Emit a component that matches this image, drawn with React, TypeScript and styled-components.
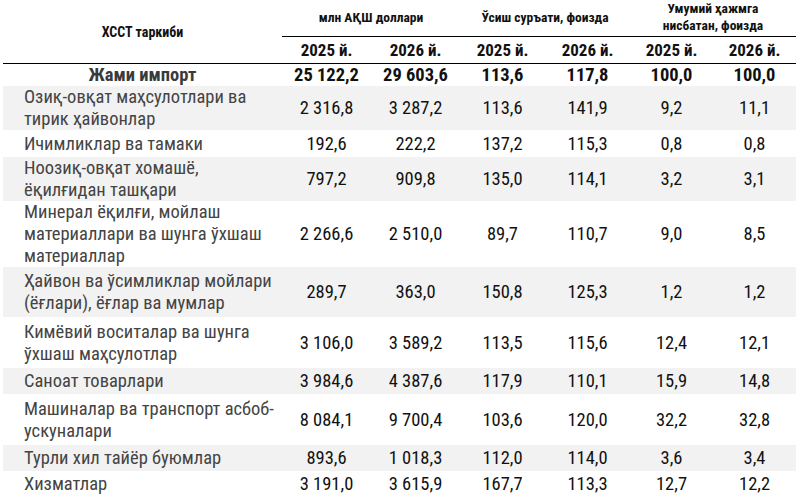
import React from 'react';
import styled, { createGlobalStyle } from 'styled-components';

const GlobalStyle = createGlobalStyle`
  html, body {
    margin: 0;
    padding: 0;
    background: #fff;
  }
  body {
    font-family: "Roboto Condensed", "Liberation Sans Narrow", Roboto, "Liberation Sans", sans-serif;
    font-stretch: condensed;
  }
`;

const Sheet = styled.table`
  margin-left: 3px;
  width: 793px;
  border-collapse: collapse;
  table-layout: fixed;
`;

const GroupHead = styled.th<{ $rule?: boolean }>`
  height: 33px;
  padding: 0 4px 2px;
  font-size: 13.5px;
  font-weight: 700;
  line-height: 17px;
  color: #111;
  text-align: center;
  vertical-align: middle;
  border-bottom: ${(p) => (p.$rule ? '1px solid #000' : 'none')};
`;

const NameHead = styled.th`
  font-size: 14px;
  font-weight: 700;
  color: #111;
  text-align: center;
  vertical-align: middle;
  padding: 0;
  border-bottom: 1px solid #000;
`;

const YearHead = styled.th`
  height: 26px;
  padding: 0;
  font-size: 17px;
  font-weight: 700;
  color: #111;
  text-align: center;
  vertical-align: middle;
  border-bottom: 1px solid #000;
`;

const Row = styled.tr<{ $shade: boolean; $h: number }>`
  height: ${(p) => p.$h}px;
  background: ${(p) => (p.$shade ? '#f2f2f2' : '#fff')};
`;

const Label = styled.td<{ $total?: boolean }>`
  padding: 0 0 0 ${(p) => (p.$total ? 0 : 21)}px;
  font-size: 18.5px;
  line-height: 22px;
  font-weight: ${(p) => (p.$total ? 700 : 400)};
  color: ${(p) => (p.$total ? '#3a3a3a' : '#444')};
  text-align: ${(p) => (p.$total ? 'center' : 'left')};
  vertical-align: middle;
  white-space: pre-line;
`;

const Num = styled.td<{ $total?: boolean }>`
  padding: 0;
  font-size: 18.5px;
  line-height: 22px;
  font-weight: ${(p) => (p.$total ? 700 : 400)};
  color: #111;
  text-align: center;
  vertical-align: middle;
  white-space: nowrap;
`;

type Line = { name: string; h: number; values: string[]; total?: boolean };

const lines: Line[] = [
  { name: 'Жами импорт', h: 22, total: true, values: ['25 122,2', '29 603,6', '113,6', '117,8', '100,0', '100,0'] },
  { name: 'Озиқ-овқат маҳсулотлари ва\nтирик ҳайвонлар', h: 44, values: ['2 316,8', '3 287,2', '113,6', '141,9', '9,2', '11,1'] },
  { name: 'Ичимликлар ва тамаки', h: 27, values: ['192,6', '222,2', '137,2', '115,3', '0,8', '0,8'] },
  { name: 'Ноозиқ-овқат хомашё,\nёқилғидан ташқари', h: 44, values: ['797,2', '909,8', '135,0', '114,1', '3,2', '3,1'] },
  { name: 'Минерал ёқилғи, мойлаш\nматериаллари ва шунга ўхшаш\nматериаллар', h: 66, values: ['2 266,6', '2 510,0', '89,7', '110,7', '9,0', '8,5'] },
  { name: 'Ҳайвон ва ўсимликлар мойлари\n(ёғлари), ёғлар ва мумлар', h: 50, values: ['289,7', '363,0', '150,8', '125,3', '1,2', '1,2'] },
  { name: 'Кимёвий воситалар ва шунга\nўхшаш маҳсулотлар', h: 51, values: ['3 106,0', '3 589,2', '113,5', '115,6', '12,4', '12,1'] },
  { name: 'Саноат товарлари', h: 26, values: ['3 984,6', '4 387,6', '117,9', '110,1', '15,9', '14,8'] },
  { name: 'Машиналар ва транспорт асбоб-\nускуналари', h: 51, values: ['8 084,1', '9 700,4', '103,6', '120,0', '32,2', '32,8'] },
  { name: 'Турли хил тайёр буюмлар', h: 26, values: ['893,6', '1 018,3', '112,0', '114,0', '3,6', '3,4'] },
  { name: 'Хизматлар', h: 26, values: ['3 191,0', '3 615,9', '167,7', '113,3', '12,7', '12,2'] },
];

const widths = [279, 89, 89, 85, 85, 83, 83];
const years = ['2025 й.', '2026 й.', '2025 й.', '2026 й.', '2025 й.', '2026 й.'];

export default function App() {
  return (
    <>
      <GlobalStyle />
      <Sheet>
        <colgroup>
          {widths.map((w, i) => (
            <col key={i} style={{ width: w }} />
          ))}
        </colgroup>
        <thead>
          <tr>
            <NameHead rowSpan={2}>ХССТ таркиби</NameHead>
            <GroupHead colSpan={2} $rule>млн АҚШ доллари</GroupHead>
            <GroupHead colSpan={2} $rule>Ўсиш суръати, фоизда</GroupHead>
            <GroupHead colSpan={2} $rule>
              Умумий ҳажмга
              <br />
              нисбатан, фоизда
            </GroupHead>
          </tr>
          <tr>
            {years.map((y, i) => (
              <YearHead key={i}>{y}</YearHead>
            ))}
          </tr>
        </thead>
        <tbody>
          {lines.map((l, i) => (
            <Row key={l.name} $shade={i % 2 === 1} $h={l.h}>
              <Label $total={l.total}>{l.name}</Label>
              {l.values.map((v, j) => (
                <Num key={j} $total={l.total}>
                  {v}
                </Num>
              ))}
            </Row>
          ))}
        </tbody>
      </Sheet>
    </>
  );
}
